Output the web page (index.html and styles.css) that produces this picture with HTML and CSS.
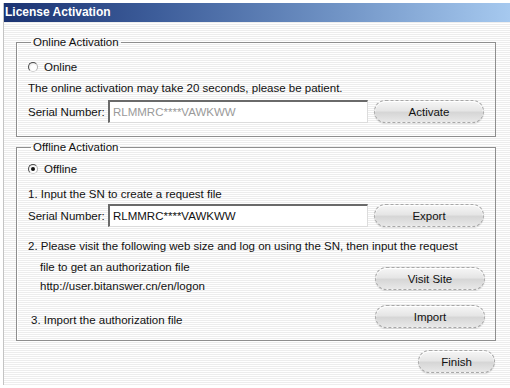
FILE: index.html
```html
<!DOCTYPE html>
<html lang="en">
<head>
    <meta charset="UTF-8">
    <title>License Activation</title>
    <link rel="stylesheet" href="styles.css">
</head>
<body>

<div class="window">
    <div class="titlebar">License Activation</div>

    <div class="content">
        <!-- Online Activation -->
        <fieldset class="group group-online">
            <legend>Online Activation</legend>
            <label class="radio-row"><span class="radio"></span>Online</label>
            <p class="line">The online activation may take 20 seconds, please be patient.</p>
            <div class="field-row">
                <span class="field-label">Serial Number:</span>
                <input type="text" class="sn-input" value="RLMMRC****VAWKWW" disabled>
                <button type="button" class="pill">Activate</button>
            </div>
        </fieldset>

        <!-- Offline Activation -->
        <fieldset class="group group-offline">
            <legend>Offline Activation</legend>
            <label class="radio-row"><span class="radio checked"></span>Offline</label>
            <p class="line step-one">1. Input the SN to create a request file</p>
            <div class="field-row">
                <span class="field-label">Serial Number:</span>
                <input type="text" class="sn-input" value="RLMMRC****VAWKWW">
                <button type="button" class="pill">Export</button>
            </div>
            <p class="line step-two">2. Please visit the following web size and log on using the SN, then input the request</p>
            <div class="step-row">
                <div class="step-text">
                    <p class="line">file to get an authorization file</p>
                    <p class="line">http://user.bitanswer.cn/en/logon</p>
                </div>
                <button type="button" class="pill visit">Visit Site</button>
            </div>
            <div class="step-row import-row">
                <p class="line step-three">3. Import the authorization file</p>
                <button type="button" class="pill">Import</button>
            </div>
        </fieldset>

        <div class="footer">
            <button type="button" class="pill finish">Finish</button>
        </div>
    </div>
</div>

</body>
</html>
```

FILE: styles.css
```css
body {
    margin: 0;
    background: #fff;
    font-family: 'Liberation Sans', Arial, sans-serif;
    font-size: 11.5px;
    color: #111;
}
.window {
    margin-left: 3px;
    margin-top: 3px;
    height: 382px;
    border-left: 1px solid #c4c4c4;
    background: repeating-linear-gradient(#ffffff 0 1px, #ededed 1px 2px);
}
.titlebar {
    height: 19px;
    line-height: 19px;
    padding-left: 1px;
    color: #fff;
    font-weight: bold;
    font-size: 12px;
    background: linear-gradient(to right, #1b3372 0%, #3d5d9a 30%, #6f92c4 65%, #a6c9ef 100%);
}
.content {
    padding: 13px 14px 0 12px;
}
.group {
    margin: 0;
    padding: 0 8px 13px 11px;
    border: 1px solid #8e8e8e;
    box-shadow: inset 1px 1px 0 #fff;
}
.group legend {
    padding: 0 2px;
    margin-left: 3px;
    line-height: 14px;
    color: #111;
}
.group-offline {
    margin-top: 3px;
    padding-bottom: 11px;
}
.radio-row {
    display: flex;
    align-items: center;
    height: 18px;
    margin-top: 9px;
}
.group-offline .radio-row {
    margin-top: 6px;
}
.radio {
    width: 8px;
    height: 8px;
    margin-right: 6px;
    border: 1px solid #5a5a5a;
    border-color: #4a4a4a #b0b0b0 #d0d0d0 #4a4a4a;
    border-radius: 50%;
    background: radial-gradient(circle at 60% 65%, #fff 40%, #d6d6d6 100%);
    position: relative;
}
.radio.checked::after {
    content: "";
    position: absolute;
    left: 2px;
    top: 2px;
    width: 4px;
    height: 4px;
    border-radius: 50%;
    background: #111;
}
.line {
    margin: 3px 0 0;
    line-height: 18px;
    white-space: nowrap;
}
.step-one {
    margin-top: 7px;
}
.field-row {
    display: flex;
    align-items: center;
    margin-top: 3px;
}
.group-offline .field-row {
    margin-top: 1px;
}
.field-label {
    width: 80px;
}
.sn-input {
    width: 260px;
    height: 23px;
    box-sizing: border-box;
    padding: 0 3px;
    font: inherit;
    color: #111;
    background: #fff;
    border-style: solid;
    border-width: 2px 1px 1px 2px;
    border-color: #6a6a6a #dcdcdc #dcdcdc #6a6a6a;
}
.sn-input:disabled {
    color: #9a9a9a;
}
.pill {
    width: 110px;
    height: 23px;
    margin-left: 6px;
    padding: 0;
    font: inherit;
    color: #111;
    border: 1px dashed #a8a8a8;
    border-radius: 12px;
    background: linear-gradient(#f6f6f6 0%, #e6e6e6 45%, #d6d6d6 55%, #e8e8e8 100%);
    box-shadow: inset 0 1px 0 #fff, 0 1px 1px rgba(0, 0, 0, 0.12);
    cursor: pointer;
}
.step-two {
    margin-top: 10px;
}
.step-row {
    display: flex;
    align-items: center;
    justify-content: space-between;
    padding-right: 2px;
}
.step-text {
    padding-left: 12px;
    padding-top: 3px;
}
.step-text .line {
    margin-top: 0;
    line-height: 19px;
}
.visit {
    margin-top: 6px;
}
.import-row {
    align-items: flex-start;
    margin-top: 9px;
}
.step-three {
    margin-top: 6px;
    padding-left: 3px;
}
.footer {
    display: flex;
    justify-content: flex-end;
    padding: 9px 1px 0 0;
}
.finish {
    width: 77px;
}
```
